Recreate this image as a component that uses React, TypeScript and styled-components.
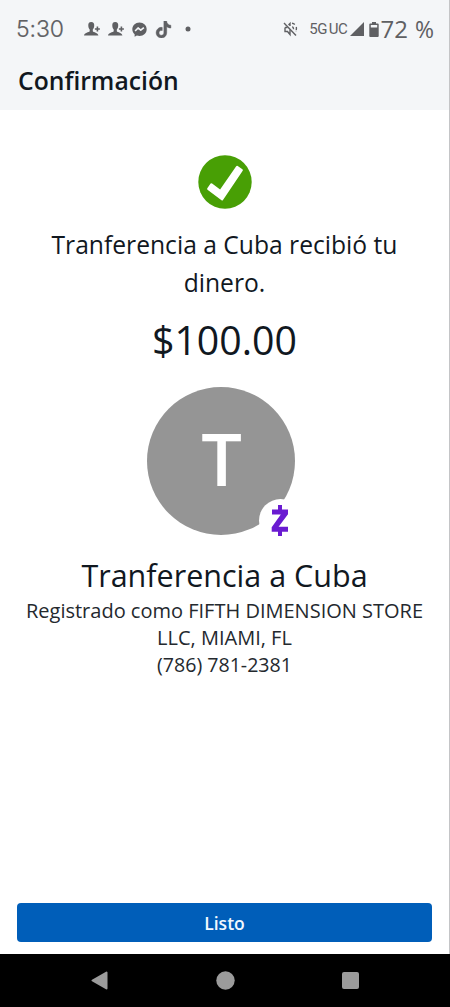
import React from "react";
import styled, { createGlobalStyle } from "styled-components";

const GlobalStyle = createGlobalStyle`
  * {
    box-sizing: border-box;
  }
  body {
    margin: 0;
    background: #fff;
    font-family: "Open Sans", "Noto Sans", sans-serif;
    color: #11181f;
  }
`;

const Screen = styled.div`
  display: flex;
  flex-direction: column;
  width: 450px;
  height: 1007px;
  overflow: hidden;
`;

const Page = styled.div`
  display: flex;
  flex-direction: column;
  flex: 1;
  border-right: 1px solid #c4c5c7;
`;

const Header = styled.header`
  height: 110px;
  background: #f4f6f8;
`;

const StatusBar = styled.div`
  display: flex;
  align-items: center;
  height: 58px;
  padding: 0 15px 0 16px;
  color: #5f6063;
`;

const Clock = styled.span`
  width: 68px;
  font-family: Inter, sans-serif;
  font-size: 23px;
  font-weight: 300;
  letter-spacing: -0.1px;
  -webkit-text-stroke: 0.2px currentColor;
`;

const Notifications = styled.div`
  display: flex;
  align-items: center;
  gap: 8px;
  margin-right: auto;
`;

const Network = styled.span`
  margin-left: 11px;
  font-family: Roboto, sans-serif;
  font-size: 15px;
  font-weight: 400;
  letter-spacing: -0.3px;
  word-spacing: -2px;
  white-space: nowrap;
`;

const BatteryLevel = styled.span<{ $size: number; $offset?: number }>`
  margin-left: ${({ $offset }) => $offset || 0}px;
  font-family: "Open Sans", sans-serif;
  font-size: ${({ $size }) => $size}px;
  font-weight: 400;
  line-height: 32px;
  white-space: nowrap;
`;

const StatusIcon = styled.svg<{ $gap?: number }>`
  display: block;
  flex: none;
  margin-left: ${({ $gap }) => $gap || 0}px;
`;

const Title = styled.h1`
  margin: 0;
  padding-left: 18px;
  font-size: 24.7px;
  font-weight: 600;
  line-height: 45px;
`;

const Content = styled.main`
  display: flex;
  flex-direction: column;
  align-items: center;
  flex: 1;
  padding-top: 45px;
  text-align: center;
`;

const Message = styled.p`
  width: 380px;
  margin: 17px 0 0;
  font-size: 24.65px;
  line-height: 38px;
`;

const Amount = styled.div`
  margin-top: 10px;
  font-size: 39.3px;
  line-height: 57px;
`;

const Avatar = styled.div`
  position: relative;
  display: flex;
  justify-content: center;
  width: 148px;
  height: 148px;
  margin: 18px 8px 0 0;
  padding-left: 2px;
  border-radius: 50%;
  background: #959595;
  color: #fff;
  font-size: 72px;
  font-weight: 600;
  line-height: 142px;
`;

const ZelleBadge = styled.span`
  position: absolute;
  right: -7px;
  bottom: -7px;
  display: flex;
  align-items: center;
  justify-content: center;
  width: 43px;
  height: 43px;
  border-radius: 50%;
  background: #fff;
`;

const Recipient = styled.h2`
  margin: 19px 0 1px;
  font-size: 30.5px;
  font-weight: 400;
  line-height: 42px;
`;

const Details = styled.p<{ $size: number; $lineHeight: number }>`
  width: 410px;
  margin: 0;
  font-size: ${({ $size }) => $size}px;
  line-height: ${({ $lineHeight }) => $lineHeight}px;
  color: #24292e;
`;

const Footer = styled.footer`
  padding: 0 17px 12px;
`;

const DoneButton = styled.button`
  display: block;
  width: 100%;
  height: 39px;
  padding: 0;
  border: 0;
  border-radius: 4px;
  background: #005eb9;
  color: #f1f9ff;
  font-family: inherit;
  font-size: 17.5px;
  font-weight: 600;
`;

const NavBar = styled.nav`
  display: flex;
  align-items: center;
  justify-content: space-between;
  height: 53px;
  padding: 0 91px 0 91px;
  background: #000;
`;

const ContactIcon = () => (
  <StatusIcon width="16" height="16" viewBox="0 0 16 16" fill="currentColor">
    <path d="M7.2 1C4.9 1 4.1 2.6 4.3 4.8c.1 1.7.6 2.8 1.4 3.7v1.8C4.9 11.4.5 11.6 0 14.6h14.4c-.5-3-4.8-3.2-5.6-4.3V8.5c.8-.9 1.3-2 1.4-3.7C10.4 2.6 9.5 1 7.2 1z" />
    <path d="M12.6 5.5h1.6v1.7h1.7v1.6h-1.7v1.7h-1.6V8.8h-1.7V7.2h1.7z" />
  </StatusIcon>
);

const MessengerIcon = () => (
  <StatusIcon width="15" height="15" viewBox="0 0 24 24">
    <path
      d="M12 .8C5.3.8.5 5.6.5 11.7c0 3.3 1.4 6.1 3.7 8v3.7l3.6-1.7c1.3.4 2.7.6 4.2.6 6.7 0 11.5-4.7 11.5-10.7S18.7.8 12 .8z"
      fill="currentColor"
    />
    <path d="M5 14.5l4.7-5 4.3 3.6 5-4" fill="none" stroke="#f4f6f8" strokeWidth="2.6" strokeLinejoin="round" />
  </StatusIcon>
);

const TikTokIcon = () => (
  <StatusIcon width="17" height="17" viewBox="0 0 24 24" fill="currentColor">
    <path
      d="M12.525.02c1.31-.02 2.61-.01 3.91-.02.08 1.53.63 3.09 1.75 4.17 1.12 1.11 2.7 1.62 4.24 1.79v4.03c-1.44-.05-2.89-.35-4.2-.97-.57-.26-1.1-.59-1.62-.93-.01 2.92.01 5.84-.02 8.75-.08 1.4-.54 2.79-1.35 3.94-1.31 1.92-3.58 3.17-5.91 3.21-1.43.08-2.86-.31-4.08-1.03-2.02-1.19-3.44-3.37-3.65-5.71-.02-.5-.03-1-.01-1.49.18-1.9 1.12-3.72 2.58-4.96 1.66-1.44 3.98-2.13 6.15-1.72.02 1.48-.04 2.96-.04 4.44-.99-.32-2.15-.23-3.02.37-.63.41-1.11 1.04-1.36 1.75-.21.51-.15 1.07-.14 1.61.24 1.64 1.82 3.02 3.5 2.87 1.12-.01 2.19-.66 2.77-1.61.19-.33.4-.67.41-1.06.1-1.79.06-3.57.07-5.36.01-4.03-.01-8.05.02-12.07z"
      stroke="currentColor"
      strokeWidth=".6"
    />
  </StatusIcon>
);

const MutedIcon = () => (
  <StatusIcon width="15" height="16" viewBox="0 0 15 16" fill="none" stroke="currentColor" strokeWidth="1.4">
    <path d="M1 2l12 12.5" />
    <path d="M7 5V2.5L5.5 4M2 6.5v4h2.5l2.5 3V8.5M2 6.5h2.5" />
    <path d="M9 2.2c1.5.2 2.7.9 3.5 2M13.3 6c.3 1.5.1 3-.5 4.2M9.3 5.6c1 .7 1.4 1.7 1.2 2.9" strokeDasharray="3 1" />
  </StatusIcon>
);

const ZelleIcon = () => (
  <svg width="18" height="31" viewBox="0 0 18 31" fill="#6a1bd1">
    <path d="M7 0h4v6H7zM7 25h4v6H7z" />
    <path d="M1 4.5h16v4.7L7.6 21.8H17v5H.7v-4.5L9.8 9.5H1z" />
  </svg>
);

const SuccessIcon = () => (
  <svg width="54" height="54" viewBox="0 0 54 54">
    <circle cx="27" cy="27" r="26.7" fill="#489f05" />
    <path d="M9.3 33.3l3.3-4.7q.7-.8 1.5-.1l8 6L38.2 11.2q.6-.9 1.5-.3l4.7 3.3q.9.6.3 1.5L25 45q-.6.9-1.5.2L9.5 34.7q-.7-.6-.2-1.4z" fill="#fff" />
  </svg>
);

export default function App() {
  return (
    <>
      <GlobalStyle />
      <Screen>
        <Page>
          <Header>
            <StatusBar>
              <Clock>5:30</Clock>
              <Notifications>
                <ContactIcon />
                <ContactIcon />
                <MessengerIcon />
                <TikTokIcon />
                <StatusIcon width="6" height="6" viewBox="0 0 6 6" $gap={5}>
                  <circle cx="3" cy="3" r="2.5" fill="currentColor" />
                </StatusIcon>
              </Notifications>
              <MutedIcon />
              <Network>5G UC</Network>
              <StatusIcon width="14" height="14" viewBox="0 0 14 14" $gap={2}>
                <path d="M14 0v14H0z" fill="currentColor" />
              </StatusIcon>
              <StatusIcon width="10" height="15" viewBox="0 0 10 15" $gap={5}>
                <path d="M3 0h4v1.5h1.7q1 0 1 1V14q0 1-1 1H1.3q-1 0-1-1V2.5q0-1 1-1H3zM1.800 3v2.500h6.400V3z" fill="currentColor" fillRule="evenodd" />
              </StatusIcon>
              <BatteryLevel $size={24} $offset={2}>72</BatteryLevel>
              <BatteryLevel $size={23} $offset={7}>%</BatteryLevel>
            </StatusBar>
            <Title>Confirmación</Title>
          </Header>
          <Content>
            <SuccessIcon />
            <Message>Tranferencia a Cuba recibió tu dinero.</Message>
            <Amount>$100.00</Amount>
            <Avatar>
              T
              <ZelleBadge>
                <ZelleIcon />
              </ZelleBadge>
            </Avatar>
            <Recipient>Tranferencia a Cuba</Recipient>
            <Details $size={20} $lineHeight={27}>
              Registrado como FIFTH DIMENSION STORE LLC, MIAMI, FL
            </Details>
            <Details $size={19.6} $lineHeight={28}>
              (786) 781-2381
            </Details>
          </Content>
          <Footer>
            <DoneButton type="button">Listo</DoneButton>
          </Footer>
        </Page>
        <NavBar>
          <svg width="17" height="19" viewBox="0 0 17 19">
            <path d="M15.5 1.5v16L1.5 9.5z" fill="#9b9b9b" stroke="#9b9b9b" strokeWidth="2" strokeLinejoin="round" />
          </svg>
          <svg width="19" height="19" viewBox="0 0 19 19">
            <circle cx="9.5" cy="9.5" r="9.2" fill="#9b9b9b" />
          </svg>
          <svg width="17" height="17" viewBox="0 0 17 17">
            <rect width="17" height="17" rx="2" fill="#9b9b9b" />
          </svg>
        </NavBar>
      </Screen>
    </>
  );
}
